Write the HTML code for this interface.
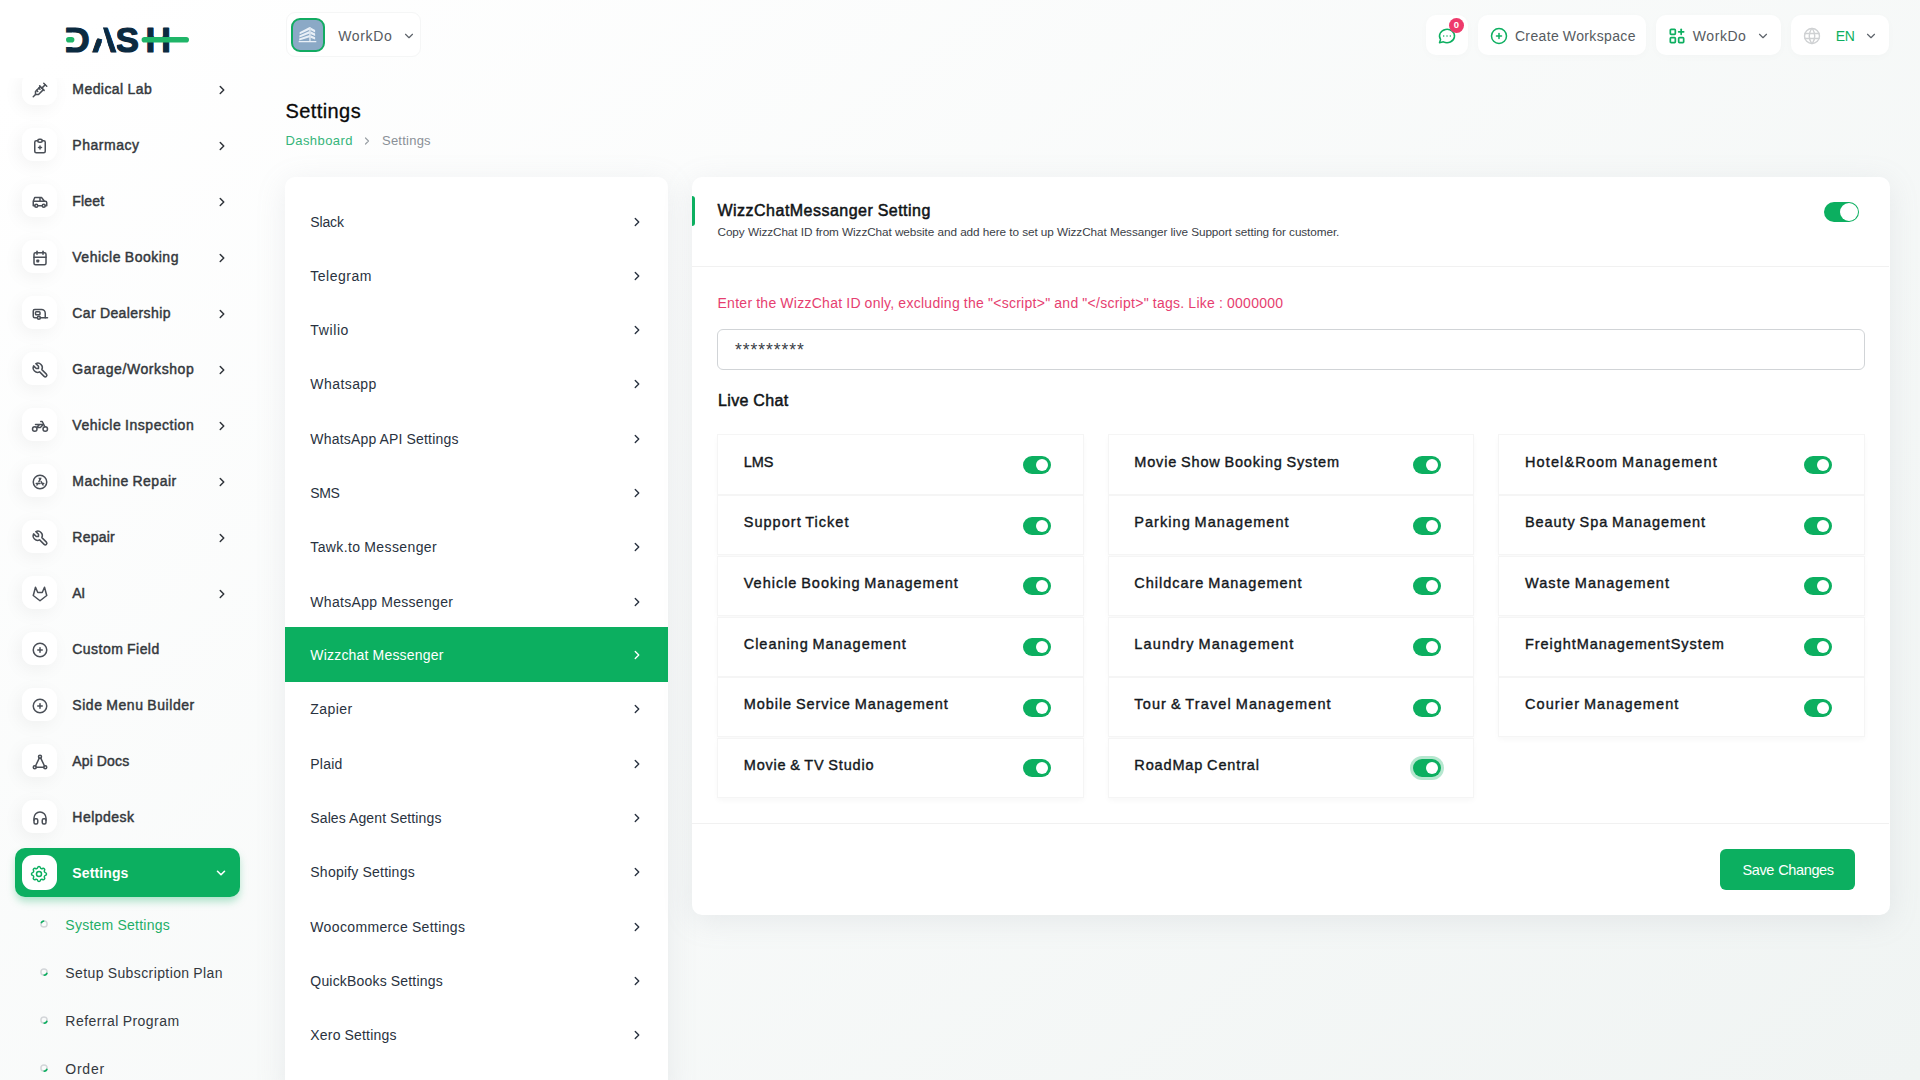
<!DOCTYPE html><html lang="en"><head><meta charset="utf-8"><title>Settings</title><style>
*{box-sizing:border-box;margin:0;padding:0}
html,body{width:1920px;height:1080px;overflow:hidden}
body{background:linear-gradient(141.55deg,rgba(240,244,243,0) 3.46%,#f0f4f3 99.86%),#fff;font-family:"Liberation Sans",sans-serif;font-size:14px;color:#212529;position:relative}
.abs{position:absolute}
svg{display:block}
.t{position:absolute;white-space:pre;line-height:1}
.sb-ico{position:absolute;left:22px;width:34.600px;height:33.600px;border-radius:11px;background:#fff;box-shadow:-3px 4px 18px rgba(0,0,0,.05);display:flex;align-items:center;justify-content:center;color:#4a4f57}
.hbox{position:absolute;top:15px;height:40px;background:#fff;border-radius:10px;box-shadow:0 2px 10px rgba(0,0,0,.02)}
.card{position:absolute;background:#fff;border-radius:10px;box-shadow:0 6px 30px rgba(140,146,160,.15)}
.tg{position:absolute;width:28px;height:18px;border-radius:9px;background:#0CAF60}
.tg:after{content:"";position:absolute;right:3px;top:3px;width:12px;height:12px;border-radius:50%;background:#fff}
.cell{position:absolute;width:366.5px;height:60.300px;background:#fff;border:1px solid #f5f5f5;box-shadow:0 3px 5px rgba(0,0,0,.028)}
</style></head><body>
<div class="abs" style="left:0;top:78px;width:280px;height:1002px;overflow:hidden"><div class="abs" style="left:0;top:-78px;width:280px;height:1080px">
<div class="sb-ico" style="top:71.7px"></div>
<div class="abs" style="left:30.50px;top:80.50px;color:#4a4f57"><svg width="18" height="18" viewBox="0 0 24 24" fill="none" stroke="currentColor" stroke-width="2.000" stroke-linecap="round" stroke-linejoin="round" ><path d="M17 3l4 4"/><path d="M19 5l-4.5 4.5"/><path d="M11.5 6.5l6 6"/><path d="M16.5 11.5l-6.5 6.5h-4v-4l6.5 -6.5"/><path d="M7.5 12.5l1.5 1.5"/><path d="M10.5 9.5l1.5 1.5"/><path d="M3 21l3 -3"/></svg></div>
<div class="t" style="left:72.30px;top:81px;line-height:16px;font-size:14px;color:#34383c;letter-spacing:0.446px;word-spacing:-0.535px;-webkit-text-stroke:0.45px #34383c;">Medical Lab</div>
<div class="abs" style="left:214.50px;top:82.60px;color:#30353b"><svg width="14" height="14" viewBox="0 0 24 24" fill="none" stroke="currentColor" stroke-width="2.571" stroke-linecap="round" stroke-linejoin="round" ><polyline points="9 6 15 12 9 18"/></svg></div>
<div class="sb-ico" style="top:127.7px"></div>
<div class="abs" style="left:30.50px;top:136.50px;color:#4a4f57"><svg width="18" height="18" viewBox="0 0 24 24" fill="none" stroke="currentColor" stroke-width="2.000" stroke-linecap="round" stroke-linejoin="round" ><path d="M9 5h-2a2 2 0 0 0 -2 2v12a2 2 0 0 0 2 2h10a2 2 0 0 0 2 -2v-12a2 2 0 0 0 -2 -2h-2"/><rect x="9" y="3" width="6" height="4" rx="2"/><path d="M10 14h4"/><path d="M12 12v4"/></svg></div>
<div class="t" style="left:72.30px;top:137px;line-height:16px;font-size:14px;color:#34383c;letter-spacing:0.521px;-webkit-text-stroke:0.45px #34383c;">Pharmacy</div>
<div class="abs" style="left:214.50px;top:138.60px;color:#30353b"><svg width="14" height="14" viewBox="0 0 24 24" fill="none" stroke="currentColor" stroke-width="2.571" stroke-linecap="round" stroke-linejoin="round" ><polyline points="9 6 15 12 9 18"/></svg></div>
<div class="sb-ico" style="top:183.7px"></div>
<div class="abs" style="left:30.50px;top:192.50px;color:#4a4f57"><svg width="18" height="18" viewBox="0 0 24 24" fill="none" stroke="currentColor" stroke-width="2.000" stroke-linecap="round" stroke-linejoin="round" ><circle cx="7" cy="17" r="2"/><circle cx="17" cy="17" r="2"/><path d="M5 17h-2v-6l2 -5h9l4 5h1a2 2 0 0 1 2 2v4h-2m-4 0h-6m-6 -6h15m-6 0v-5"/></svg></div>
<div class="t" style="left:72.30px;top:193px;line-height:16px;font-size:14px;color:#34383c;letter-spacing:0.200px;-webkit-text-stroke:0.45px #34383c;">Fleet</div>
<div class="abs" style="left:214.50px;top:194.60px;color:#30353b"><svg width="14" height="14" viewBox="0 0 24 24" fill="none" stroke="currentColor" stroke-width="2.571" stroke-linecap="round" stroke-linejoin="round" ><polyline points="9 6 15 12 9 18"/></svg></div>
<div class="sb-ico" style="top:239.7px"></div>
<div class="abs" style="left:30.50px;top:248.50px;color:#4a4f57"><svg width="18" height="18" viewBox="0 0 24 24" fill="none" stroke="currentColor" stroke-width="2.000" stroke-linecap="round" stroke-linejoin="round" ><rect x="4" y="5" width="16" height="16" rx="2"/><line x1="16" y1="3" x2="16" y2="7"/><line x1="8" y1="3" x2="8" y2="7"/><line x1="4" y1="11" x2="20" y2="11"/><rect x="8" y="15" width="2" height="2"/></svg></div>
<div class="t" style="left:72.30px;top:249px;line-height:16px;font-size:14px;color:#34383c;letter-spacing:0.510px;word-spacing:-0.613px;-webkit-text-stroke:0.45px #34383c;">Vehicle Booking</div>
<div class="abs" style="left:214.50px;top:250.60px;color:#30353b"><svg width="14" height="14" viewBox="0 0 24 24" fill="none" stroke="currentColor" stroke-width="2.571" stroke-linecap="round" stroke-linejoin="round" ><polyline points="9 6 15 12 9 18"/></svg></div>
<div class="sb-ico" style="top:295.7px"></div>
<div class="abs" style="left:30.50px;top:304.50px;color:#4a4f57"><svg width="18" height="18" viewBox="0 0 24 24" fill="none" stroke="currentColor" stroke-width="2.000" stroke-linecap="round" stroke-linejoin="round" ><circle cx="10.500" cy="17" r="2"/><path d="M8.500 17h-3.500a2 2 0 0 1 -2 -2v-7a2 2 0 0 1 2 -2h9a5 5 0 0 1 5 5v6"/><path d="M12.500 17h9.500"/><rect x="6" y="9" width="6" height="4" rx="1"/></svg></div>
<div class="t" style="left:72.30px;top:305px;line-height:16px;font-size:14px;color:#34383c;letter-spacing:0.407px;word-spacing:-0.488px;-webkit-text-stroke:0.45px #34383c;">Car Dealership</div>
<div class="abs" style="left:214.50px;top:306.60px;color:#30353b"><svg width="14" height="14" viewBox="0 0 24 24" fill="none" stroke="currentColor" stroke-width="2.571" stroke-linecap="round" stroke-linejoin="round" ><polyline points="9 6 15 12 9 18"/></svg></div>
<div class="sb-ico" style="top:351.7px"></div>
<div class="abs" style="left:30.50px;top:360.50px;color:#4a4f57"><svg width="18" height="18" viewBox="0 0 24 24" fill="none" stroke="currentColor" stroke-width="2.000" stroke-linecap="round" stroke-linejoin="round" ><path d="M7 10h3v-3l-3.5 -3.5a6 6 0 0 1 8 8l6 6a2 2 0 0 1 -3 3l-6 -6a6 6 0 0 1 -8 -8l3.5 3.5"/></svg></div>
<div class="t" style="left:72.30px;top:361px;line-height:16px;font-size:14px;color:#34383c;letter-spacing:0.576px;-webkit-text-stroke:0.45px #34383c;">Garage/Workshop</div>
<div class="abs" style="left:214.50px;top:362.60px;color:#30353b"><svg width="14" height="14" viewBox="0 0 24 24" fill="none" stroke="currentColor" stroke-width="2.571" stroke-linecap="round" stroke-linejoin="round" ><polyline points="9 6 15 12 9 18"/></svg></div>
<div class="sb-ico" style="top:407.7px"></div>
<div class="abs" style="left:30.50px;top:416.50px;color:#4a4f57"><svg width="18" height="18" viewBox="0 0 24 24" fill="none" stroke="currentColor" stroke-width="2.000" stroke-linecap="round" stroke-linejoin="round" ><circle cx="5" cy="16" r="3"/><circle cx="19" cy="16" r="3"/><path d="M7.5 14h5l4 -4h-10.5m1.500 4l4 -4"/><path d="M13 6h2l1.5 3l2 4"/></svg></div>
<div class="t" style="left:72.30px;top:417px;line-height:16px;font-size:14px;color:#34383c;letter-spacing:0.542px;word-spacing:-0.651px;-webkit-text-stroke:0.45px #34383c;">Vehicle Inspection</div>
<div class="abs" style="left:214.50px;top:418.60px;color:#30353b"><svg width="14" height="14" viewBox="0 0 24 24" fill="none" stroke="currentColor" stroke-width="2.571" stroke-linecap="round" stroke-linejoin="round" ><polyline points="9 6 15 12 9 18"/></svg></div>
<div class="sb-ico" style="top:463.7px"></div>
<div class="abs" style="left:30.50px;top:472.50px;color:#4a4f57"><svg width="18" height="18" viewBox="0 0 24 24" fill="none" stroke="currentColor" stroke-width="2.000" stroke-linecap="round" stroke-linejoin="round" ><circle cx="12" cy="12" r="9"/><path d="M8 16l1.106 -1.99m1.4 -2.522l2.494 -4.488"/><path d="M7 14h5m2.9 0h2.1"/><path d="M16 16l-2.51 -4.518m-1.487 -2.677l-1 -1.805"/></svg></div>
<div class="t" style="left:72.30px;top:473px;line-height:16px;font-size:14px;color:#34383c;letter-spacing:0.497px;word-spacing:-0.596px;-webkit-text-stroke:0.45px #34383c;">Machine Repair</div>
<div class="abs" style="left:214.50px;top:474.60px;color:#30353b"><svg width="14" height="14" viewBox="0 0 24 24" fill="none" stroke="currentColor" stroke-width="2.571" stroke-linecap="round" stroke-linejoin="round" ><polyline points="9 6 15 12 9 18"/></svg></div>
<div class="sb-ico" style="top:519.7px"></div>
<div class="abs" style="left:30.50px;top:528.50px;color:#4a4f57"><svg width="18" height="18" viewBox="0 0 24 24" fill="none" stroke="currentColor" stroke-width="2.000" stroke-linecap="round" stroke-linejoin="round" ><path d="M7 10h3v-3l-3.5 -3.5a6 6 0 0 1 8 8l6 6a2 2 0 0 1 -3 3l-6 -6a6 6 0 0 1 -8 -8l3.5 3.5"/></svg></div>
<div class="t" style="left:72.30px;top:529px;line-height:16px;font-size:14px;color:#34383c;letter-spacing:0.235px;-webkit-text-stroke:0.45px #34383c;">Repair</div>
<div class="abs" style="left:214.50px;top:530.60px;color:#30353b"><svg width="14" height="14" viewBox="0 0 24 24" fill="none" stroke="currentColor" stroke-width="2.571" stroke-linecap="round" stroke-linejoin="round" ><polyline points="9 6 15 12 9 18"/></svg></div>
<div class="sb-ico" style="top:575.7px"></div>
<div class="abs" style="left:30.50px;top:584.50px;color:#4a4f57"><svg width="18" height="18" viewBox="0 0 24 24" fill="none" stroke="currentColor" stroke-width="2.000" stroke-linecap="round" stroke-linejoin="round" ><path d="M21 14l-9 7l-9 -7l3 -11l3 7h6l3 -7z"/></svg></div>
<div class="t" style="left:72.30px;top:585px;line-height:16px;font-size:14px;color:#34383c;letter-spacing:-0.350px;-webkit-text-stroke:0.45px #34383c;">AI</div>
<div class="abs" style="left:214.50px;top:586.60px;color:#30353b"><svg width="14" height="14" viewBox="0 0 24 24" fill="none" stroke="currentColor" stroke-width="2.571" stroke-linecap="round" stroke-linejoin="round" ><polyline points="9 6 15 12 9 18"/></svg></div>
<div class="sb-ico" style="top:631.7px"></div>
<div class="abs" style="left:30.50px;top:640.50px;color:#4a4f57"><svg width="18" height="18" viewBox="0 0 24 24" fill="none" stroke="currentColor" stroke-width="2.000" stroke-linecap="round" stroke-linejoin="round" ><circle cx="12" cy="12" r="9"/><line x1="9" y1="12" x2="15" y2="12"/><line x1="12" y1="9" x2="12" y2="15"/></svg></div>
<div class="t" style="left:72.30px;top:641px;line-height:16px;font-size:14px;color:#34383c;letter-spacing:0.455px;word-spacing:-0.546px;-webkit-text-stroke:0.45px #34383c;">Custom Field</div>
<div class="sb-ico" style="top:687.7px"></div>
<div class="abs" style="left:30.50px;top:696.50px;color:#4a4f57"><svg width="18" height="18" viewBox="0 0 24 24" fill="none" stroke="currentColor" stroke-width="2.000" stroke-linecap="round" stroke-linejoin="round" ><circle cx="12" cy="12" r="9"/><line x1="9" y1="12" x2="15" y2="12"/><line x1="12" y1="9" x2="12" y2="15"/></svg></div>
<div class="t" style="left:72.30px;top:697px;line-height:16px;font-size:14px;color:#34383c;letter-spacing:0.553px;word-spacing:-0.663px;-webkit-text-stroke:0.45px #34383c;">Side Menu Builder</div>
<div class="sb-ico" style="top:743.7px"></div>
<div class="abs" style="left:30.50px;top:752.50px;color:#4a4f57"><svg width="18" height="18" viewBox="0 0 24 24" fill="none" stroke="currentColor" stroke-width="2.000" stroke-linecap="round" stroke-linejoin="round" ><circle cx="12" cy="5" r="2"/><circle cx="5" cy="19" r="2"/><circle cx="19" cy="19" r="2"/><path d="M6 17.3l5 -10.4"/><path d="M18 17.3l-5 -10.4"/><path d="M7 19h10"/></svg></div>
<div class="t" style="left:72.30px;top:753px;line-height:16px;font-size:14px;color:#34383c;letter-spacing:0.154px;word-spacing:-0.185px;-webkit-text-stroke:0.45px #34383c;">Api Docs</div>
<div class="sb-ico" style="top:799.7px"></div>
<div class="abs" style="left:30.50px;top:808.50px;color:#4a4f57"><svg width="18" height="18" viewBox="0 0 24 24" fill="none" stroke="currentColor" stroke-width="2.000" stroke-linecap="round" stroke-linejoin="round" ><rect x="4" y="13" rx="2" width="5" height="7"/><rect x="15" y="13" rx="2" width="5" height="7"/><path d="M4 15v-3a8 8 0 0 1 16 0v3"/></svg></div>
<div class="t" style="left:72.30px;top:809px;line-height:16px;font-size:14px;color:#34383c;letter-spacing:0.471px;-webkit-text-stroke:0.45px #34383c;">Helpdesk</div>
<div class="abs" style="left:15px;top:848px;width:225px;height:49px;background:#0CAF60;border-radius:10px;box-shadow:0 5px 9px -1px rgba(12,175,96,.35)"></div>
<div class="sb-ico" style="top:855px;height:35px;box-shadow:none"></div>
<div class="abs" style="left:29.40px;top:863.50px;color:#0CAF60"><svg width="20" height="20" viewBox="0 0 24 24" fill="none" stroke="currentColor" stroke-width="1.800" stroke-linecap="round" stroke-linejoin="round" ><path d="M10.325 4.317c.426 -1.756 2.924 -1.756 3.35 0a1.724 1.724 0 0 0 2.573 1.066c1.543 -.94 3.31 .826 2.37 2.37a1.724 1.724 0 0 0 1.065 2.572c1.756 .426 1.756 2.924 0 3.35a1.724 1.724 0 0 0 -1.066 2.573c.94 1.543 -.826 3.31 -2.37 2.37a1.724 1.724 0 0 0 -2.572 1.065c-.426 1.756 -2.924 1.756 -3.35 0a1.724 1.724 0 0 0 -2.573 -1.066c-1.543 .94 -3.31 -.826 -2.37 -2.37a1.724 1.724 0 0 0 -1.065 -2.572c-1.756 -.426 -1.756 -2.924 0 -3.35a1.724 1.724 0 0 0 1.066 -2.573c-.94 -1.543 .826 -3.31 2.37 -2.37c1 .608 2.296 .07 2.572 -1.065z"/><circle cx="12" cy="12" r="3"/></svg></div>
<div class="t" style="left:72.30px;top:865px;line-height:16px;font-size:14px;color:#fff;letter-spacing:0.124px;font-weight:700;">Settings</div>
<div class="abs" style="left:213.50px;top:865.50px;color:#fff"><svg width="14" height="14" viewBox="0 0 24 24" fill="none" stroke="currentColor" stroke-width="2.743" stroke-linecap="round" stroke-linejoin="round" ><polyline points="6 9 12 15 18 9"/></svg></div>
<svg class="abs" style="left:40px;top:920.3px;width:8px;height:8px" viewBox="0 0 8 8" fill="none" stroke-width="1.5"><circle cx="4" cy="4" r="3.1" stroke="#d3d6d9"/><path d="M1.2 3.2A3.2 3.2 0 0 1 4.2 .9" stroke="#0CAF60"/></svg>
<div class="t" style="left:65.30px;top:917px;line-height:16px;font-size:14px;color:#1fae68;letter-spacing:0.261px;word-spacing:-0.313px;">System Settings</div>
<svg class="abs" style="left:40px;top:968.3px;width:8px;height:8px" viewBox="0 0 8 8" fill="none" stroke-width="1.5"><circle cx="4" cy="4" r="3.1" stroke="#d3d6d9"/><path d="M7.1 4.8A3.2 3.2 0 0 1 3.6 7.1" stroke="#0CAF60"/></svg>
<div class="t" style="left:65.30px;top:965px;line-height:16px;font-size:14px;color:#33383e;letter-spacing:0.401px;word-spacing:-0.481px;">Setup Subscription Plan</div>
<svg class="abs" style="left:40px;top:1016.3px;width:8px;height:8px" viewBox="0 0 8 8" fill="none" stroke-width="1.5"><circle cx="4" cy="4" r="3.1" stroke="#d3d6d9"/><path d="M7.1 4.8A3.2 3.2 0 0 1 3.6 7.1" stroke="#0CAF60"/></svg>
<div class="t" style="left:65.30px;top:1013px;line-height:16px;font-size:14px;color:#33383e;letter-spacing:0.469px;word-spacing:-0.563px;">Referral Program</div>
<svg class="abs" style="left:40px;top:1064.3px;width:8px;height:8px" viewBox="0 0 8 8" fill="none" stroke-width="1.5"><circle cx="4" cy="4" r="3.1" stroke="#d3d6d9"/><path d="M7.1 4.8A3.2 3.2 0 0 1 3.6 7.1" stroke="#0CAF60"/></svg>
<div class="t" style="left:65.30px;top:1061px;line-height:16px;font-size:14px;color:#33383e;letter-spacing:0.763px;">Order</div>
</div></div>
<svg class="abs" style="left:60px;top:18px" width="140" height="42" viewBox="0 0 140 42" role="img" aria-label="DASH">
<defs><clipPath id="lg"><rect x="0" y="0" width="31.400" height="42"/><polygon points="42.700,8.500 48.100,8.500 57,35.500 50.700,35.500"/><polygon points="31.700,35.500 37.900,35.500 42.600,21.600 37.800,20.200 36.400,21.800"/><rect x="56.800" y="0" width="28" height="42"/><rect x="85" y="0" width="9.200" height="42"/><rect x="102.400" y="0" width="10" height="42"/></clipPath></defs>
<text clip-path="url(#lg)" y="34.400" font-family="Liberation Sans, sans-serif" font-weight="700" font-size="35.200" fill="#0b2a40" stroke="#0b2a40" stroke-width="1.200" stroke-linejoin="round"><tspan x="4.200">D</tspan><tspan x="31.600">A</tspan><tspan x="55.400">S</tspan><tspan x="85.600">H</tspan></text>
<rect x="4" y="14.600" width="9.200" height="14.400" fill="#fff"/>
<rect x="6" y="18.900" width="8.400" height="5.600" rx="2.800" fill="#1fb568"/>
<rect x="81.600" y="18.900" width="47.400" height="5.600" rx="2.800" fill="#1fb568"/>
</svg>
<div class="abs" style="left:286px;top:12px;width:135px;height:45px;background:#fff;border-radius:9px;border:1px solid #f5f6f6"></div>
<div class="abs" style="left:291px;top:18px;width:34px;height:34px;border-radius:9px;border:2px solid #12ab62;background:#8ba9c6;overflow:hidden">
<svg width="30" height="30" viewBox="0 0 30 30"><g fill="#e9f0f7"><path d="M6.600 12.300l10-5.200v2.600l-10 4.600z"/><path d="M6.400 15.500l10.200-4.500v2.500l-10.200 4z"/><path d="M6.200 18.600l10.400-3.700v2.400l-10.400 3.100z"/><path d="M17.500 7.500l4.600 2.500v2.400l-4.600-2.300z"/><path d="M17.500 11.300l4.600 2.300v2.400l-4.600-2.100z"/><path d="M17.500 15.200l4.600 2v2.400l-4.600-1.800z"/><path d="M16.300 7.100h1.300v14h-1.300z"/><path d="M5.700 21h17.600v1.300h-17.600z"/></g></svg></div>
<div class="t" style="left:338.20px;top:28px;line-height:16px;font-size:14px;color:#565b61;letter-spacing:0.658px;">WorkDo</div>
<div class="abs" style="left:402.00px;top:28.70px;color:#5d636a"><svg width="14" height="14" viewBox="0 0 24 24" fill="none" stroke="currentColor" stroke-width="1.971" stroke-linecap="round" stroke-linejoin="round" ><polyline points="6 9 12 15 18 9"/></svg></div>
<div class="hbox" style="left:1426px;width:42px"></div>
<div class="abs" style="left:1437.30px;top:26.20px;color:#0CAF60"><svg width="20" height="20" viewBox="0 0 24 24" fill="none" stroke="currentColor" stroke-width="1.800" stroke-linecap="round" stroke-linejoin="round" ><path d="M3 20l1.3 -3.9a9 8 0 1 1 3.4 2.9l-4.7 1"/><line x1="12" y1="12" x2="12" y2="12.01"/><line x1="8" y1="12" x2="8" y2="12.01"/><line x1="16" y1="12" x2="16" y2="12.01"/></svg></div>
<div class="abs" style="left:1449px;top:18px;width:15px;height:15px;border-radius:50%;background:#ee3a6b;color:#fff;font-size:9.5px;font-weight:700;line-height:14.5px;text-align:center">0</div>
<div class="hbox" style="left:1478px;width:168px"></div>
<div class="abs" style="left:1489.00px;top:26.00px;color:#0CAF60"><svg width="20" height="20" viewBox="0 0 24 24" fill="none" stroke="currentColor" stroke-width="1.800" stroke-linecap="round" stroke-linejoin="round" ><circle cx="12" cy="12" r="9"/><line x1="9" y1="12" x2="15" y2="12"/><line x1="12" y1="9" x2="12" y2="15"/></svg></div>
<div class="t" style="left:1514.90px;top:28px;line-height:16px;font-size:14px;color:#565b61;letter-spacing:0.356px;word-spacing:-0.427px;">Create Workspace</div>
<div class="hbox" style="left:1656px;width:125px"></div>
<div class="abs" style="left:1667.20px;top:26.00px;color:#0CAF60"><svg width="20" height="20" viewBox="0 0 24 24" fill="none" stroke="currentColor" stroke-width="2.040" stroke-linecap="round" stroke-linejoin="round" ><rect x="4" y="4" width="6" height="6" rx="1"/><rect x="4" y="14" width="6" height="6" rx="1"/><rect x="14" y="14" width="6" height="6" rx="1"/><line x1="14" y1="7" x2="20" y2="7"/><line x1="17" y1="4" x2="17" y2="10"/></svg></div>
<div class="t" style="left:1692.80px;top:28px;line-height:16px;font-size:14px;color:#565b61;letter-spacing:0.558px;">WorkDo</div>
<div class="abs" style="left:1756.20px;top:28.90px;color:#5d636a"><svg width="14" height="14" viewBox="0 0 24 24" fill="none" stroke="currentColor" stroke-width="1.971" stroke-linecap="round" stroke-linejoin="round" ><polyline points="6 9 12 15 18 9"/></svg></div>
<div class="hbox" style="left:1791px;width:98px"></div>
<div class="abs" style="left:1802.10px;top:26.00px;color:#cfd1d3"><svg width="20" height="20" viewBox="0 0 24 24" fill="none" stroke="currentColor" stroke-width="1.680" stroke-linecap="round" stroke-linejoin="round" ><circle cx="12" cy="12" r="9"/><line x1="3.6" y1="9" x2="20.4" y2="9"/><line x1="3.6" y1="15" x2="20.4" y2="15"/><path d="M11.5 3a17 17 0 0 0 0 18"/><path d="M12.5 3a17 17 0 0 1 0 18"/></svg></div>
<div class="t" style="left:1835.70px;top:28px;line-height:16px;font-size:14px;color:#0CAF60;letter-spacing:-0.350px;">EN</div>
<div class="abs" style="left:1864.00px;top:28.90px;color:#5d636a"><svg width="14" height="14" viewBox="0 0 24 24" fill="none" stroke="currentColor" stroke-width="1.971" stroke-linecap="round" stroke-linejoin="round" ><polyline points="6 9 12 15 18 9"/></svg></div>
<div class="t" style="left:285.50px;top:100px;line-height:22px;font-size:20px;color:#0a0a0a;letter-spacing:0.412px;-webkit-text-stroke:0.3px #0a0a0a;">Settings</div>
<div class="t" style="left:285.50px;top:133px;line-height:15px;font-size:13px;color:#35b57a;letter-spacing:0.411px;">Dashboard</div>
<div class="abs" style="left:361.00px;top:134.50px;color:#9aa0a6"><svg width="12" height="12" viewBox="0 0 24 24" fill="none" stroke="currentColor" stroke-width="2.400" stroke-linecap="round" stroke-linejoin="round" ><polyline points="9 6 15 12 9 18"/></svg></div>
<div class="t" style="left:382.00px;top:133px;line-height:15px;font-size:13px;color:#8a9097;letter-spacing:0.231px;">Settings</div>
<div class="card" style="left:285.400px;top:177px;width:382.600px;height:920px"></div>
<div class="t" style="left:310.30px;top:214px;line-height:16px;font-size:14px;color:#293240;letter-spacing:-0.159px;">Slack</div>
<div class="abs" style="left:629.60px;top:214.50px;color:#293240"><svg width="14" height="14" viewBox="0 0 24 24" fill="none" stroke="currentColor" stroke-width="2.314" stroke-linecap="round" stroke-linejoin="round" ><polyline points="9 6 15 12 9 18"/></svg></div>
<div class="t" style="left:310.30px;top:268px;line-height:16px;font-size:14px;color:#293240;letter-spacing:0.501px;">Telegram</div>
<div class="abs" style="left:629.60px;top:268.50px;color:#293240"><svg width="14" height="14" viewBox="0 0 24 24" fill="none" stroke="currentColor" stroke-width="2.314" stroke-linecap="round" stroke-linejoin="round" ><polyline points="9 6 15 12 9 18"/></svg></div>
<div class="t" style="left:310.30px;top:322px;line-height:16px;font-size:14px;color:#293240;letter-spacing:0.617px;">Twilio</div>
<div class="abs" style="left:629.60px;top:322.50px;color:#293240"><svg width="14" height="14" viewBox="0 0 24 24" fill="none" stroke="currentColor" stroke-width="2.314" stroke-linecap="round" stroke-linejoin="round" ><polyline points="9 6 15 12 9 18"/></svg></div>
<div class="t" style="left:310.30px;top:376px;line-height:16px;font-size:14px;color:#293240;letter-spacing:0.436px;">Whatsapp</div>
<div class="abs" style="left:629.60px;top:376.50px;color:#293240"><svg width="14" height="14" viewBox="0 0 24 24" fill="none" stroke="currentColor" stroke-width="2.314" stroke-linecap="round" stroke-linejoin="round" ><polyline points="9 6 15 12 9 18"/></svg></div>
<div class="t" style="left:310.30px;top:431px;line-height:16px;font-size:14px;color:#293240;letter-spacing:0.190px;word-spacing:-0.228px;">WhatsApp API Settings</div>
<div class="abs" style="left:629.60px;top:431.50px;color:#293240"><svg width="14" height="14" viewBox="0 0 24 24" fill="none" stroke="currentColor" stroke-width="2.314" stroke-linecap="round" stroke-linejoin="round" ><polyline points="9 6 15 12 9 18"/></svg></div>
<div class="t" style="left:310.30px;top:485px;line-height:16px;font-size:14px;color:#293240;letter-spacing:-0.350px;">SMS</div>
<div class="abs" style="left:629.60px;top:485.50px;color:#293240"><svg width="14" height="14" viewBox="0 0 24 24" fill="none" stroke="currentColor" stroke-width="2.314" stroke-linecap="round" stroke-linejoin="round" ><polyline points="9 6 15 12 9 18"/></svg></div>
<div class="t" style="left:310.30px;top:539px;line-height:16px;font-size:14px;color:#293240;letter-spacing:0.388px;word-spacing:-0.465px;">Tawk.to Messenger</div>
<div class="abs" style="left:629.60px;top:539.50px;color:#293240"><svg width="14" height="14" viewBox="0 0 24 24" fill="none" stroke="currentColor" stroke-width="2.314" stroke-linecap="round" stroke-linejoin="round" ><polyline points="9 6 15 12 9 18"/></svg></div>
<div class="t" style="left:310.30px;top:594px;line-height:16px;font-size:14px;color:#293240;letter-spacing:0.308px;word-spacing:-0.370px;">WhatsApp Messenger</div>
<div class="abs" style="left:629.60px;top:594.50px;color:#293240"><svg width="14" height="14" viewBox="0 0 24 24" fill="none" stroke="currentColor" stroke-width="2.314" stroke-linecap="round" stroke-linejoin="round" ><polyline points="9 6 15 12 9 18"/></svg></div>
<div class="abs" style="left:285px;top:627px;width:383px;height:54.5px;background:#0CAF60"></div>
<div class="t" style="left:310.30px;top:647px;line-height:16px;font-size:14px;color:#fff;letter-spacing:0.200px;word-spacing:-0.240px;">Wizzchat Messenger</div>
<div class="abs" style="left:629.60px;top:647.50px;color:#fff"><svg width="14" height="14" viewBox="0 0 24 24" fill="none" stroke="currentColor" stroke-width="2.314" stroke-linecap="round" stroke-linejoin="round" ><polyline points="9 6 15 12 9 18"/></svg></div>
<div class="t" style="left:310.30px;top:701px;line-height:16px;font-size:14px;color:#293240;letter-spacing:0.433px;">Zapier</div>
<div class="abs" style="left:629.60px;top:701.50px;color:#293240"><svg width="14" height="14" viewBox="0 0 24 24" fill="none" stroke="currentColor" stroke-width="2.314" stroke-linecap="round" stroke-linejoin="round" ><polyline points="9 6 15 12 9 18"/></svg></div>
<div class="t" style="left:310.30px;top:756px;line-height:16px;font-size:14px;color:#293240;letter-spacing:0.240px;">Plaid</div>
<div class="abs" style="left:629.60px;top:756.50px;color:#293240"><svg width="14" height="14" viewBox="0 0 24 24" fill="none" stroke="currentColor" stroke-width="2.314" stroke-linecap="round" stroke-linejoin="round" ><polyline points="9 6 15 12 9 18"/></svg></div>
<div class="t" style="left:310.30px;top:810px;line-height:16px;font-size:14px;color:#293240;letter-spacing:0.114px;word-spacing:-0.137px;">Sales Agent Settings</div>
<div class="abs" style="left:629.60px;top:810.50px;color:#293240"><svg width="14" height="14" viewBox="0 0 24 24" fill="none" stroke="currentColor" stroke-width="2.314" stroke-linecap="round" stroke-linejoin="round" ><polyline points="9 6 15 12 9 18"/></svg></div>
<div class="t" style="left:310.30px;top:864px;line-height:16px;font-size:14px;color:#293240;letter-spacing:0.230px;word-spacing:-0.276px;">Shopify Settings</div>
<div class="abs" style="left:629.60px;top:864.50px;color:#293240"><svg width="14" height="14" viewBox="0 0 24 24" fill="none" stroke="currentColor" stroke-width="2.314" stroke-linecap="round" stroke-linejoin="round" ><polyline points="9 6 15 12 9 18"/></svg></div>
<div class="t" style="left:310.30px;top:919px;line-height:16px;font-size:14px;color:#293240;letter-spacing:0.356px;word-spacing:-0.427px;">Woocommerce Settings</div>
<div class="abs" style="left:629.60px;top:919.50px;color:#293240"><svg width="14" height="14" viewBox="0 0 24 24" fill="none" stroke="currentColor" stroke-width="2.314" stroke-linecap="round" stroke-linejoin="round" ><polyline points="9 6 15 12 9 18"/></svg></div>
<div class="t" style="left:310.30px;top:973px;line-height:16px;font-size:14px;color:#293240;letter-spacing:0.192px;word-spacing:-0.231px;">QuickBooks Settings</div>
<div class="abs" style="left:629.60px;top:973.50px;color:#293240"><svg width="14" height="14" viewBox="0 0 24 24" fill="none" stroke="currentColor" stroke-width="2.314" stroke-linecap="round" stroke-linejoin="round" ><polyline points="9 6 15 12 9 18"/></svg></div>
<div class="t" style="left:310.30px;top:1027px;line-height:16px;font-size:14px;color:#293240;letter-spacing:0.189px;word-spacing:-0.226px;">Xero Settings</div>
<div class="abs" style="left:629.60px;top:1027.50px;color:#293240"><svg width="14" height="14" viewBox="0 0 24 24" fill="none" stroke="currentColor" stroke-width="2.314" stroke-linecap="round" stroke-linejoin="round" ><polyline points="9 6 15 12 9 18"/></svg></div>
<div class="card" style="left:692.400px;top:176.700px;width:1197.600px;height:738.300px"></div>
<div class="abs" style="left:692px;top:196px;width:3px;height:30px;background:#0CAF60;border-radius:0 3px 3px 0"></div>
<div class="t" style="left:717.50px;top:202px;line-height:17px;font-size:16px;color:#111417;letter-spacing:0.482px;word-spacing:-0.578px;-webkit-text-stroke:0.5px #111417;">WizzChatMessanger Setting</div>
<div class="t" style="left:717.50px;top:225px;line-height:13px;font-size:11.75px;color:#3a4047;letter-spacing:-0.083px;word-spacing:0.099px;">Copy WizzChat ID from WizzChat website and add here to set up WizzChat Messanger live Support setting for customer.</div>
<div class="abs" style="left:1824px;top:202px;width:35px;height:20px;border-radius:10px;background:#0CAF60"><div class="abs" style="right:1px;top:1px;width:18px;height:18px;border-radius:50%;background:#fff"></div></div>
<div class="abs" style="left:692px;top:266px;width:1197px;height:1px;background:#f1f1f1"></div>
<div class="t" style="left:717.50px;top:295px;line-height:16px;font-size:14px;color:#e63e70;letter-spacing:0.275px;word-spacing:-0.330px;">Enter the WizzChat ID only, excluding the "&lt;script&gt;" and "&lt;/script&gt;" tags. Like : 0000000</div>
<div class="abs" style="left:717px;top:329px;width:1148px;height:41px;border:1px solid #d1d4d7;border-radius:6px"></div>
<div class="t" style="left:735.10px;top:340px;line-height:20px;font-size:17.5px;color:#3a4047;letter-spacing:0.925px;">*********</div>
<div class="t" style="left:718.00px;top:392px;line-height:17px;font-size:16px;color:#111417;letter-spacing:0.376px;word-spacing:-0.451px;-webkit-text-stroke:0.5px #111417;">Live Chat</div>
<div class="cell" style="left:717.2px;top:434.40px"></div>
<div class="tg" style="left:1022.80px;top:455.80px"></div>
<div class="t" style="left:743.75px;top:454px;line-height:16px;font-size:14.5px;color:#14181c;letter-spacing:-0.049px;-webkit-text-stroke:0.38px #14181c;">LMS</div>
<div class="cell" style="left:717.2px;top:495.10px"></div>
<div class="tg" style="left:1022.80px;top:516.50px"></div>
<div class="t" style="left:743.75px;top:514px;line-height:16px;font-size:14.5px;color:#14181c;letter-spacing:1.021px;word-spacing:-1.225px;-webkit-text-stroke:0.38px #14181c;">Support Ticket</div>
<div class="cell" style="left:717.2px;top:555.80px"></div>
<div class="tg" style="left:1022.80px;top:577.20px"></div>
<div class="t" style="left:743.75px;top:575px;line-height:16px;font-size:14.5px;color:#14181c;letter-spacing:0.981px;word-spacing:-1.177px;-webkit-text-stroke:0.38px #14181c;">Vehicle Booking Management</div>
<div class="cell" style="left:717.2px;top:616.50px"></div>
<div class="tg" style="left:1022.80px;top:637.90px"></div>
<div class="t" style="left:743.75px;top:636px;line-height:16px;font-size:14.5px;color:#14181c;letter-spacing:0.960px;word-spacing:-1.152px;-webkit-text-stroke:0.38px #14181c;">Cleaning Management</div>
<div class="cell" style="left:717.2px;top:677.20px"></div>
<div class="tg" style="left:1022.80px;top:698.60px"></div>
<div class="t" style="left:743.75px;top:696px;line-height:16px;font-size:14.5px;color:#14181c;letter-spacing:0.938px;word-spacing:-1.126px;-webkit-text-stroke:0.38px #14181c;">Mobile Service Management</div>
<div class="cell" style="left:717.2px;top:737.90px"></div>
<div class="tg" style="left:1022.80px;top:759.30px"></div>
<div class="t" style="left:743.75px;top:757px;line-height:16px;font-size:14.5px;color:#14181c;letter-spacing:0.799px;word-spacing:-0.958px;-webkit-text-stroke:0.38px #14181c;">Movie &amp; TV Studio</div>
<div class="cell" style="left:1107.7px;top:434.40px"></div>
<div class="tg" style="left:1413.30px;top:455.80px"></div>
<div class="t" style="left:1134.30px;top:454px;line-height:16px;font-size:14.5px;color:#14181c;letter-spacing:0.831px;word-spacing:-0.997px;-webkit-text-stroke:0.38px #14181c;">Movie Show Booking System</div>
<div class="cell" style="left:1107.7px;top:495.10px"></div>
<div class="tg" style="left:1413.30px;top:516.50px"></div>
<div class="t" style="left:1134.30px;top:514px;line-height:16px;font-size:14.5px;color:#14181c;letter-spacing:1.044px;word-spacing:-1.253px;-webkit-text-stroke:0.38px #14181c;">Parking Management</div>
<div class="cell" style="left:1107.7px;top:555.80px"></div>
<div class="tg" style="left:1413.30px;top:577.20px"></div>
<div class="t" style="left:1134.30px;top:575px;line-height:16px;font-size:14.5px;color:#14181c;letter-spacing:0.978px;word-spacing:-1.174px;-webkit-text-stroke:0.38px #14181c;">Childcare Management</div>
<div class="cell" style="left:1107.7px;top:616.50px"></div>
<div class="tg" style="left:1413.30px;top:637.90px"></div>
<div class="t" style="left:1134.30px;top:636px;line-height:16px;font-size:14.5px;color:#14181c;letter-spacing:1.136px;word-spacing:-1.363px;-webkit-text-stroke:0.38px #14181c;">Laundry Management</div>
<div class="cell" style="left:1107.7px;top:677.20px"></div>
<div class="tg" style="left:1413.30px;top:698.60px"></div>
<div class="t" style="left:1134.30px;top:696px;line-height:16px;font-size:14.5px;color:#14181c;letter-spacing:1.146px;word-spacing:-1.375px;-webkit-text-stroke:0.38px #14181c;">Tour &amp; Travel Management</div>
<div class="cell" style="left:1107.7px;top:737.90px"></div>
<div class="tg" style="left:1413.30px;top:759.30px;box-shadow:0 0 0 3px rgba(12,175,96,.3)"></div>
<div class="t" style="left:1134.30px;top:757px;line-height:16px;font-size:14.5px;color:#14181c;letter-spacing:0.865px;word-spacing:-1.038px;-webkit-text-stroke:0.38px #14181c;">RoadMap Central</div>
<div class="cell" style="left:1498.2px;top:434.40px"></div>
<div class="tg" style="left:1803.80px;top:455.80px"></div>
<div class="t" style="left:1525.00px;top:454px;line-height:16px;font-size:14.5px;color:#14181c;letter-spacing:1.109px;word-spacing:-1.331px;-webkit-text-stroke:0.38px #14181c;">Hotel&amp;Room Management</div>
<div class="cell" style="left:1498.2px;top:495.10px"></div>
<div class="tg" style="left:1803.80px;top:516.50px"></div>
<div class="t" style="left:1525.00px;top:514px;line-height:16px;font-size:14.5px;color:#14181c;letter-spacing:0.931px;word-spacing:-1.117px;-webkit-text-stroke:0.38px #14181c;">Beauty Spa Management</div>
<div class="cell" style="left:1498.2px;top:555.80px"></div>
<div class="tg" style="left:1803.80px;top:577.20px"></div>
<div class="t" style="left:1525.00px;top:575px;line-height:16px;font-size:14.5px;color:#14181c;letter-spacing:1.073px;word-spacing:-1.288px;-webkit-text-stroke:0.38px #14181c;">Waste Management</div>
<div class="cell" style="left:1498.2px;top:616.50px"></div>
<div class="tg" style="left:1803.80px;top:637.90px"></div>
<div class="t" style="left:1525.00px;top:636px;line-height:16px;font-size:14.5px;color:#14181c;letter-spacing:0.937px;-webkit-text-stroke:0.38px #14181c;">FreightManagementSystem</div>
<div class="cell" style="left:1498.2px;top:677.20px"></div>
<div class="tg" style="left:1803.80px;top:698.60px"></div>
<div class="t" style="left:1525.00px;top:696px;line-height:16px;font-size:14.5px;color:#14181c;letter-spacing:1.083px;word-spacing:-1.300px;-webkit-text-stroke:0.38px #14181c;">Courier Management</div>
<div class="abs" style="left:692px;top:823px;width:1197px;height:1px;background:#f1f1f1"></div>
<div class="abs" style="left:1720px;top:849px;width:135px;height:40.5px;border-radius:6px;background:#0CAF60"></div>
<div class="t" style="left:1742.40px;top:862px;line-height:16px;font-size:14.5px;color:#fff;letter-spacing:-0.350px;word-spacing:0.420px;">Save Changes</div>
</body></html>
